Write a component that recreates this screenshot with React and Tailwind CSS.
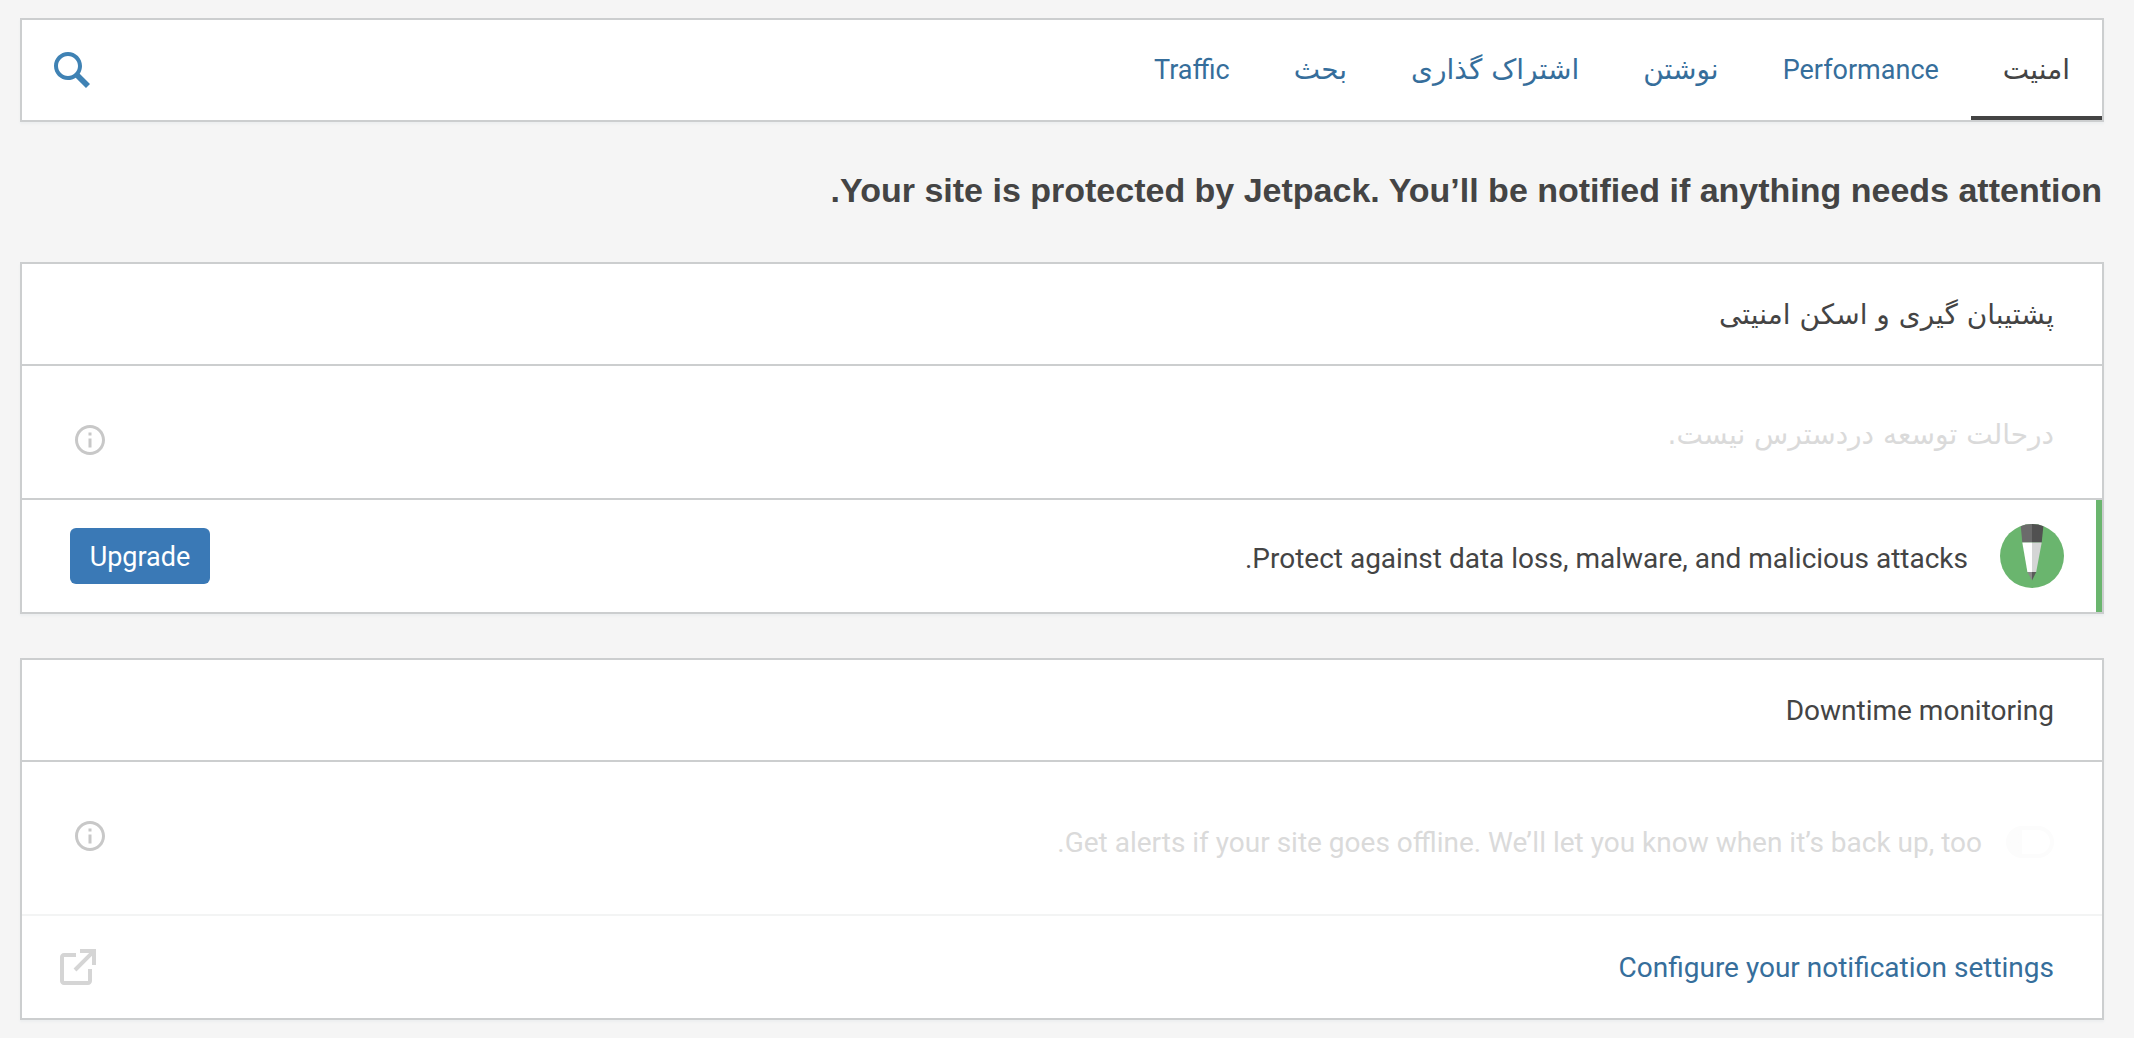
import React, { useState } from 'react';

const LATIN = "font-['Roboto','DejaVu_Sans',sans-serif] text-[28px]";
const LATIN_SMALL = "font-['Roboto','DejaVu_Sans',sans-serif] text-[27px]";
const PERSIAN = "font-['DejaVu_Sans',sans-serif] text-[28px]";

const tabs = [
  { label: 'امنیت', font: PERSIAN, active: true },
  { label: 'Performance', font: LATIN_SMALL },
  { label: 'نوشتن', font: PERSIAN },
  { label: 'اشتراک گذاری', font: PERSIAN },
  { label: 'بحث', font: PERSIAN },
  { label: 'Traffic', font: LATIN_SMALL },
];

function SearchIcon() {
  return (
    <svg viewBox="0 0 24 24" className="size-12 fill-[#3f82b4]" aria-hidden="true">
      <path d="M21 19l-5.154-5.154C16.574 12.742 17 11.42 17 10c0-3.866-3.134-7-7-7s-7 3.134-7 7 3.134 7 7 7c1.42 0 2.742-.426 3.846-1.154L19 21l2-2zM5 10c0-2.757 2.243-5 5-5s5 2.243 5 5-2.243 5-5 5-5-2.243-5-5z" />
    </svg>
  );
}

function InfoIcon() {
  return (
    <svg viewBox="0 0 24 24" className="size-9 fill-[#c8c8c8]" aria-hidden="true">
      <path d="M13 9h-2V7h2v2zm0 2h-2v6h2v-6zm-1-7c-4.411 0-8 3.589-8 8s3.589 8 8 8 8-3.589 8-8-3.589-8-8-8m0-2c5.523 0 10 4.477 10 10s-4.477 10-10 10S2 17.523 2 12 6.477 2 12 2z" />
    </svg>
  );
}

function ExternalIcon() {
  return (
    <svg viewBox="0 0 24 24" className="size-12 fill-[#d5d5d5]" aria-hidden="true">
      <path d="M19 13v6c0 1.105-.895 2-2 2H5c-1.105 0-2-.895-2-2V7c0-1.105.895-2 2-2h6v2H5v12h12v-6h2zM13 3v2h4.586l-7.793 7.793 1.414 1.414L19 6.414V11h2V3h-8z" />
    </svg>
  );
}

function PlanIcon() {
  return (
    <svg viewBox="0 0 64 64" className="size-16 shrink-0" aria-hidden="true">
      <clipPath id="plan-disc">
        <circle cx="32" cy="32" r="32" />
      </clipPath>
      <g clipPath="url(#plan-disc)">
        <rect width="64" height="64" fill="#6ab56e" />
        <path d="M20.6 0H32v18.500H22.300z" fill="#6b6b6b" />
        <path d="M43.600 0H32v18.500h9.700z" fill="#515151" />
        <path d="M22.300 18.500H32V48h-4.600z" fill="#fff" />
        <path d="M41.700 18.500H32V48h4.200z" fill="#d4d5d5" />
        <path d="M27.400 48H32v8.500z" fill="#8a8a8a" />
        <path d="M36.200 48H32v8.500z" fill="#5a5a5a" />
      </g>
    </svg>
  );
}

function Card({ title, font, children }) {
  return (
    <section className="border-2 border-[#cccecf] bg-white shadow-[0_2px_2px_#eceeef]">
      <h3 className={`flex h-[102px] items-center border-b-2 border-[#cccecf] px-12 pt-[2px] leading-10 ${font}`}>
        {title}
      </h3>
      {children}
    </section>
  );
}

export default function App() {
  const [monitoring, setMonitoring] = useState(false);
  return (
    <main
      dir="rtl"
      className="min-h-screen bg-[#f5f5f5] pt-[18px] pr-[30px] pb-[18px] pl-5 text-[#444]"
    >
      <nav className="flex h-[104px] items-stretch justify-between border-2 border-[#cccecf] bg-white shadow-[0_2px_2px_#eceeef]">
        <div className="flex">
          {tabs.map((t) => (
            <a
              key={t.label}
              href="#"
              className={`flex items-center border-b-4 px-8 pt-1 leading-10 ${t.font} ${
                t.active ? 'border-[#444] text-[#444]' : 'border-transparent text-[#366e9b]'
              }`}
            >
              {t.label}
            </a>
          ))}
        </div>
        <button type="button" aria-label="Search" className="flex items-center px-[26px]">
          <SearchIcon />
        </button>
      </nav>

      <h2 className="mt-[46px] mb-[50px] px-[2px] font-['Liberation_Sans',Arial,sans-serif] text-[34px] leading-[44px] font-bold">
        Your site is protected by Jetpack. You’ll be notified if anything needs attention.
      </h2>

      <div className="flex flex-col gap-11">
        <Card title="پشتیبان گیری و اسکن امنیتی" font={PERSIAN}>
          <div className="flex h-[134px] items-center justify-between border-b-2 border-[#cccecf] pr-12 pl-[50px]">
            <p className={`mt-1 pt-[2px] leading-10 text-[#dadada] ${PERSIAN}`}>درحالت توسعه دردسترس نیست.</p>
            <button type="button" aria-label="Info" className="mt-4">
              <InfoIcon />
            </button>
          </div>
          <div className="flex h-28 items-center justify-between border-r-[6px] border-[#6ab56e] pr-8 pl-12">
            <div className="flex items-center gap-8">
              <PlanIcon />
              <p className={`mt-1 pt-[2px] leading-10 ${LATIN}`}>
                Protect against data loss, malware, and malicious attacks.
              </p>
            </div>
            <button
              type="button"
              className={`h-14 w-[140px] rounded-md bg-[#3a79b6] pt-[2px] leading-10 text-white ${LATIN_SMALL}`}
            >
              Upgrade
            </button>
          </div>
        </Card>

        <Card title="Downtime monitoring" font={LATIN}>
          <div className="flex h-[154px] items-center justify-between border-b-2 border-[#f3f4f4] pr-12 pl-[50px]">
            <label className="mt-2 flex items-center gap-6 text-[#dadada]">
              <input
                type="checkbox"
                role="switch"
                disabled
                checked={monitoring}
                onChange={(e) => setMonitoring(e.target.checked)}
                className="h-8 w-12 appearance-none rounded-full border-4 border-[#fcfcfc] bg-linear-to-l from-white from-70% to-[#fcfcfc] to-70%"
              />
              <span className={`pt-[2px] leading-10 ${LATIN}`}>
                Get alerts if your site goes offline. We’ll let you know when it’s back up, too.
              </span>
            </label>
            <button type="button" aria-label="Info" className="mb-1">
              <InfoIcon />
            </button>
          </div>
          <a href="#" className="flex h-[102px] items-center justify-between pr-12 pl-8 text-[#366e9b]">
            <span className={`pt-[2px] leading-10 ${LATIN}`}>Configure your notification settings</span>
            <ExternalIcon />
          </a>
        </Card>
      </div>
    </main>
  );
}
